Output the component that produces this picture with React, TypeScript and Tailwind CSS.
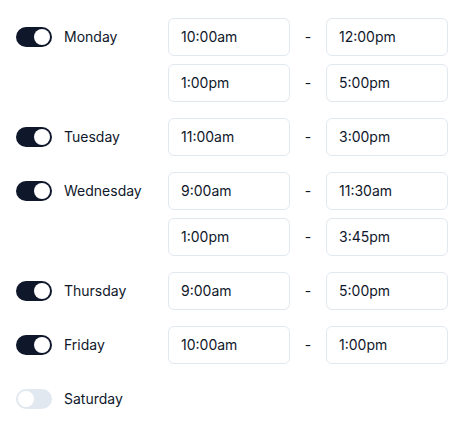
import React from "react";

type Day = { name: string; on: boolean; slots: [string, string][] };

const days: Day[] = [
  { name: "Monday", on: true, slots: [["10:00am", "12:00pm"], ["1:00pm", "5:00pm"]] },
  { name: "Tuesday", on: true, slots: [["11:00am", "3:00pm"]] },
  { name: "Wednesday", on: true, slots: [["9:00am", "11:30am"], ["1:00pm", "3:45pm"]] },
  { name: "Thursday", on: true, slots: [["9:00am", "5:00pm"]] },
  { name: "Friday", on: true, slots: [["10:00am", "1:00pm"]] },
  { name: "Saturday", on: false, slots: [] },
];

const Toggle: React.FC<{ on: boolean }> = ({ on }) => (
  <div
    className={
      on
        ? "w-9 h-5 rounded-full bg-[#0f172a] flex items-center justify-end p-[2px]"
        : "w-9 h-5 rounded-full bg-[#e2e8f0] flex items-center justify-start p-[2px]"
    }
  >
    <div className="w-4 h-4 rounded-full bg-white" />
  </div>
);

const TimeBox: React.FC<{ value: string }> = ({ value }) => (
  <div className="w-[122px] h-[38px] border border-[#e2e8f0] rounded-md px-3 flex items-center text-sm text-[#0f172a]">
    {value}
  </div>
);

export default function App() {
  return (
    <div
      className="w-[462px] h-[425px] bg-white pl-4 pt-[18px] flex flex-col gap-4"
      style={{ fontFamily: "Inter, 'Noto Sans', sans-serif" }}
    >
      {days.map((d) => (
        <div key={d.name} className="flex">
          <div className="w-[152px] h-[38px] flex items-center gap-3 shrink-0">
            <Toggle on={d.on} />
            <span className="text-sm text-[#0f172a]">{d.name}</span>
          </div>
          <div className="flex flex-col gap-2">
            {d.slots.map(([a, b], i) => (
              <div key={i} className="flex items-center">
                <TimeBox value={a} />
                <span className="w-9 text-center text-sm text-[#0f172a]">-</span>
                <TimeBox value={b} />
              </div>
            ))}
          </div>
        </div>
      ))}
    </div>
  );
}
